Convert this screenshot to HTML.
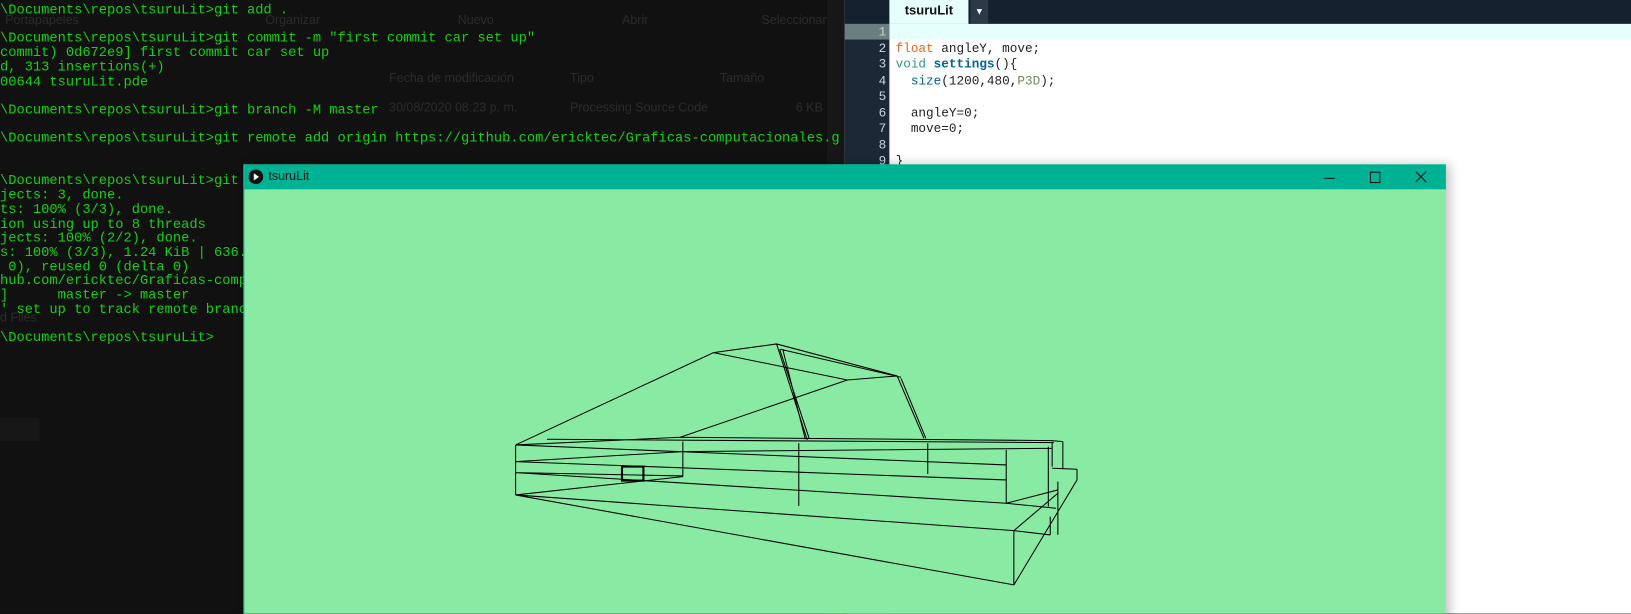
<!DOCTYPE html>
<html><head><meta charset="utf-8"><style>
html,body{margin:0;padding:0;width:1631px;height:614px;overflow:hidden;background:#111}
#s{position:absolute;left:0;top:0;width:1568px;height:590px;transform:scale(1.0402);transform-origin:0 0;overflow:hidden;background:#111}
.term{position:absolute;left:0;top:3px;width:808px;font-family:"Liberation Mono",monospace;font-size:13.2px;line-height:13.7px;color:#16d016;white-space:pre;overflow:hidden}
.ghost{position:absolute;font-family:"Liberation Sans",sans-serif;font-size:12px;color:#2c2c2c;white-space:nowrap}
#ed{position:absolute;left:812px;top:0;width:756px;height:590px;background:#fff}
#edbar{position:absolute;left:0;top:0;width:756px;height:23px;background:#14212e}
#tab{position:absolute;left:43px;top:0;width:76px;height:23px;background:#e6fffc;font-family:"Liberation Sans",sans-serif;font-weight:bold;font-size:12.5px;line-height:21px;text-align:center;color:#111}
#arr{position:absolute;left:121px;top:0;width:17px;height:23px;background:#2b3a47;color:#fff;font-size:9px;line-height:22px;text-align:center}
#gut{position:absolute;left:0;top:23px;width:43px;height:567px;background:#1b2836}
#hl{position:absolute;left:43px;top:23px;width:713px;height:15px;background:#e6fffc}
#gl1{position:absolute;left:0;top:23px;width:43px;height:15px;background:#6b7f80}
.code{position:absolute;left:0;top:24px;font-family:"Liberation Mono",monospace;font-size:12.2px;line-height:15.5px;white-space:pre}
.num{color:#c9d3dc;width:40px;text-align:right}
#win{position:absolute;left:234px;top:158px;width:1155px;height:440px;background:#89eaa3;border-left:1px solid #2ab58c;box-shadow:4px 0 10px rgba(0,0,0,.25)}
#tb{position:absolute;left:0;top:0;width:1155px;height:24px;background:#00b294}
</style></head><body><div id="s">
<div class="ghost" style="left:255px;top:12px">Organizar</div>
<div class="ghost" style="left:440px;top:12px">Nuevo</div>
<div class="ghost" style="left:598px;top:12px">Abrir</div>
<div class="ghost" style="left:732px;top:12px">Seleccionar</div>
<div class="ghost" style="left:5px;top:12px">Portapapeles</div>
<div class="ghost" style="left:374px;top:68px">Fecha de modificación</div>
<div class="ghost" style="left:548px;top:68px">Tipo</div>
<div class="ghost" style="left:692px;top:68px">Tamaño</div>
<div class="ghost" style="left:374px;top:96px">30/08/2020 08:23 p. m.</div>
<div class="ghost" style="left:548px;top:96px">Processing Source Code</div>
<div class="ghost" style="left:765px;top:96px">6 KB</div>
<div class="ghost" style="left:0;top:298px">d Files</div>
<div style="position:absolute;left:0;top:402px;width:38px;height:22px;background:#171717"></div>
<div style="position:absolute;left:795px;top:0;width:17px;height:590px;background:#171717"></div>
<div class="term">\Documents\repos\tsuruLit>git add .

\Documents\repos\tsuruLit>git commit -m "first commit car set up"
commit) 0d672e9] first commit car set up
d, 313 insertions(+)
00644 tsuruLit.pde

\Documents\repos\tsuruLit>git branch -M master

\Documents\repos\tsuruLit>git remote add origin https://github.com/ericktec/Graficas-computacionales.git


\Documents\repos\tsuruLit>git push -u origin master
jects: 3, done.
ts: 100% (3/3), done.
ion using up to 8 threads
jects: 100% (2/2), done.
s: 100% (3/3), 1.24 KiB | 636.00 KiB/s, done.
 0), reused 0 (delta 0)
hub.com/ericktec/Graficas-computacionales.git
]      master -> master
' set up to track remote branch 'master' from 'origin'.

\Documents\repos\tsuruLit></div>
<div id="ed">
<div id="edbar"></div><div id="tab">tsuruLit</div><div id="arr">▼</div>
<div id="gut"></div><div id="hl"></div><div id="gl1"></div>
<div class="code num">1
2
3
4
5
6
7
8
9</div>
<div class="code" style="left:49px;color:#222"> 
<span style="color:#e2661a">float</span> angleY, move;
<span style="color:#33997e">void</span> <b style="color:#006699">settings</b>(){
  <span style="color:#006699">size</span>(1200,480,<span style="color:#718a62">P3D</span>);

  angleY=0;
  move=0;

}</div>
</div>
<div id="win">
<div id="tb">
<svg style="position:absolute;left:4px;top:5px" width="14" height="14"><circle cx="7" cy="7" r="7" fill="#111"/><path d="M5 3.5L10 7L5 10.5Z" fill="#fff"/></svg>
<div style="position:absolute;left:23px;top:4px;font-family:'Liberation Sans',sans-serif;font-size:12px;color:#111">tsuruLit</div>
<svg style="position:absolute;left:1030px;top:0" width="125" height="24" fill="none" stroke="#111" stroke-width="1"><path d="M8 13.5H18"/><rect x="52.5" y="7.5" width="9" height="10"/><path d="M96 7L106 17M106 7L96 17"/></svg>
</div>
<svg style="position:absolute;left:-234px;top:-158px" width="1568" height="590"><g transform="translate(480.7,307.6) scale(0.3679,0.3204)" stroke="#000" fill="none" stroke-width="1">
<path vector-effect="non-scaling-stroke" d="M38 375L555 98L720 72L1035 168L1105 355M555 98L905 180M468 352L905 180L1035 168M720 72L800 360M728 88L805 355M736 88L795 358M730 88L1045 172M1045 175L1110 355M38 375L468 352L1440 362L1468 365M120 358L1445 368M38 375L38 525M38 375L1320 435M38 425L1320 480M38 458L1320 550M38 525L1340 632M1340 632L1340 795M38 525L1340 795M1340 795L1505 480M1505 448L1505 480M1440 445L1505 448M38 425L475 395L1440 385M38 458L475 468M38 525L475 470M475 365L475 470M778 370L778 558M1115 370L1115 462M1320 390L1320 550M1430 380L1430 560M1440 365L1440 440M1468 365L1468 445M1320 550L1455 510M1455 485L1455 645M1340 632L1435 645M1435 590L1435 645M1320 550L1450 565M1340 632L1455 520"/>
<rect vector-effect="non-scaling-stroke" x="316" y="440" width="56" height="42" stroke-width="2"/>
</g></svg>
</div>
</div></body></html>
